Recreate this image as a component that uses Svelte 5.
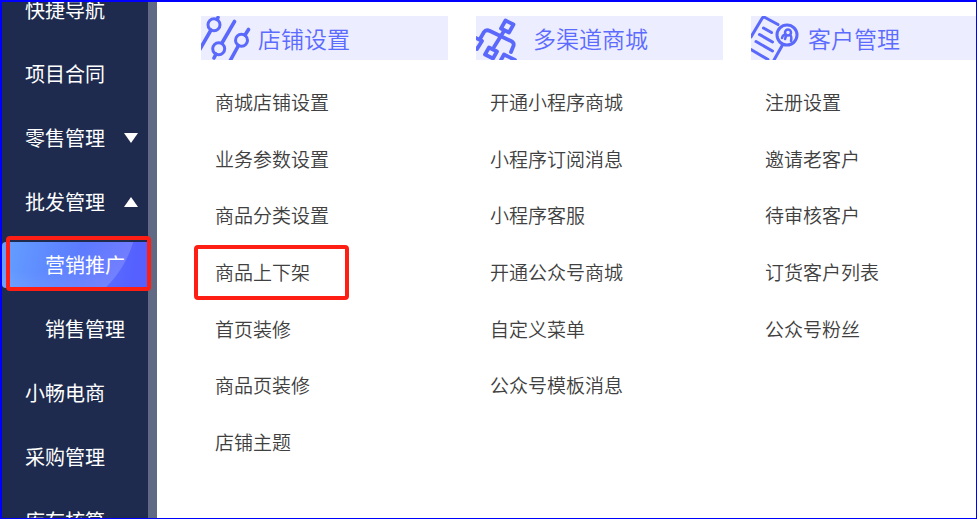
<script lang="ts">
  type NavItem = { label: string; arrow?: 'up' | 'down'; child?: boolean; active?: boolean };

  const navItems: NavItem[] = [
    { label: '快捷导航' },
    { label: '项目合同' },
    { label: '零售管理', arrow: 'down' },
    { label: '批发管理', arrow: 'up' },
    { label: '营销推广', child: true, active: true },
    { label: '销售管理', child: true },
    { label: '小畅电商' },
    { label: '采购管理' },
    { label: '库存核算' }
  ];

  const groups = [
    {
      title: '店铺设置',
      icon: 'sliders',
      links: ['商城店铺设置', '业务参数设置', '商品分类设置', '商品上下架', '首页装修', '商品页装修', '店铺主题']
    },
    {
      title: '多渠道商城',
      icon: 'channels',
      links: ['开通小程序商城', '小程序订阅消息', '小程序客服', '开通公众号商城', '自定义菜单', '公众号模板消息']
    },
    {
      title: '客户管理',
      icon: 'customer',
      links: ['注册设置', '邀请老客户', '待审核客户', '订货客户列表', '公众号粉丝']
    }
  ];

  const marked = '商品上下架';
</script>

<div class="screen">
  <nav class="sidebar">
    {#each navItems as item}
      <a href="#nav" class="nav-item" class:child={item.child} class:active={item.active}>
        <span>{item.label}</span>
        {#if item.arrow}
          <svg class="arrow" width="14" height="10" viewBox="0 0 14 10" fill="#fff">
            <path d={item.arrow === 'down' ? 'M0 0h14L7 10z' : 'M0 10h14L7 0z'} />
          </svg>
        {/if}
      </a>
    {/each}
  </nav>
  <div class="scrollbar"></div>

  <main class="panel">
    {#each groups as group}
      <section class="group">
        <h2 class="group-title">
          <svg class="icon" width="50" height="44" viewBox="0 0 50 44" fill="none" stroke="#5a69fb" stroke-width="3" stroke-linecap="round">
            {#if group.icon === 'sliders'}
              <path d="M17 1.5l-1 2M10 14L-1 33M33.5 5.5L21 27M15 38l-2 4M47.5 13.5L44 19M37.5 29.5L29 45" stroke-width="3.6" />
              <circle cx="13" cy="8.7" r="6" />
              <circle cx="17.7" cy="32.7" r="6" />
              <circle cx="40.5" cy="24.3" r="6" />
            {:else if group.icon === 'channels'}
              <g stroke-width="3.8" stroke-linejoin="round">
                <path d="M29.5 4.5L37.5 8.5L33 16.5L25 12.5z" />
                <path d="M28 15L18 31" />
                <path d="M4 23L8 16q2-3 6-1L35 25q4 2 2 6l-2 5" />
                <path d="M-2 21L6 25L1 33L-4 31" />
                <path d="M13 31.5L21 35.5L17 42.5L9 38.5z" />
                <path d="M25 44L28 38.5L39 44" />
              </g>
            {:else}
              <path d="M27 8.5L14 1.5q-2-1-3 1L0 21M31.5 29L23 44M0 33.5l17 10M12.5 12l8 4.5M8.5 18.5l13 7.5M5 25.5l16.5 9.5" />
              <circle cx="36" cy="19" r="10" />
              <g stroke-width="2.5">
                <circle cx="37" cy="16.5" r="3" />
                <path d="M31 22q1-4 4-3M39 19q2 1 1 6M35 20l-1 3" />
              </g>
            {/if}
          </svg>
          {group.title}
        </h2>
        <ul class="links">
          {#each group.links as link}
            <li>
              <a href="#link" class:marked={link === marked}>{link}</a>
            </li>
          {/each}
        </ul>
      </section>
    {/each}
  </main>
</div>

<style>
  :global(body) {
    margin: 0;
    background: #fff;
  }

  .screen {
    display: flex;
    box-sizing: border-box;
    height: 100vh;
    overflow: hidden;
    border: 1px solid #0000ff;
    border-width: 2px 1px 1px 2px;
    background: #fff;
    font-family: "Noto Sans CJK SC", "Noto Sans", sans-serif;
  }

  a {
    text-decoration: none;
  }

  .sidebar {
    display: flex;
    flex-direction: column;
    flex: none;
    width: 146px;
    /* list is scrolled part of the way past its first entry */
    margin-top: -24px;
    background: #1e2b4e;
  }

  .nav-item {
    position: relative;
    display: flex;
    flex: none;
    align-items: center;
    gap: 19px;
    height: 64px;
    padding-left: 23px;
    color: #fff;
    font-size: 20px;
    line-height: 30px;
    white-space: nowrap;
  }

  .nav-item.child {
    padding-left: 43px;
  }

  .arrow {
    flex: none;
  }

  .nav-item.active {
    height: 46px;
    margin: 8px 0 9px;
    border-radius: 4px 0 0 4px;
    background:
      radial-gradient(circle at 30px -30px, rgba(255, 255, 255, 0) 60px, rgba(255, 255, 255, 0.16) 105px, transparent 106px),
      linear-gradient(100deg, #64a0ff, #5560ff 90%);
  }

  .nav-item.active::after {
    content: "";
    position: absolute;
    inset: -6px -3px -3px 4px;
    border: 4px solid #ff1e14;
    border-radius: 4px;
  }

  .scrollbar {
    flex: none;
    width: 9px;
    background: #606a84;
  }

  .panel {
    display: grid;
    grid-template-columns: repeat(3, minmax(247px, 1fr));
    gap: 28px;
    flex: 1;
    min-width: 0;
    padding: 14px 0 0 44px;
  }

  .group-title {
    display: flex;
    align-items: center;
    gap: 7px;
    height: 44px;
    margin: 0;
    background: #ecedfe;
    color: #5c6bff;
    font-size: 23px;
    font-weight: 350;
    line-height: 34px;
    white-space: nowrap;
  }

  .icon {
    flex: none;
    overflow: hidden;
  }

  .links {
    display: grid;
    grid-template-rows: repeat(7, 1fr);
    height: 396px;
    margin: 14px 0 0;
    padding: 0 0 0 14px;
    list-style: none;
  }

  .links li {
    display: flex;
    align-items: center;
  }

  .links a {
    position: relative;
    color: #404040;
    font-size: 19px;
    font-weight: 350;
    line-height: 28px;
    white-space: nowrap;
  }

  .links a.marked::after {
    content: "";
    position: absolute;
    inset: -13px -39px -14px -21px;
    border: 4px solid #ff1e14;
    border-radius: 4px;
  }
</style>
